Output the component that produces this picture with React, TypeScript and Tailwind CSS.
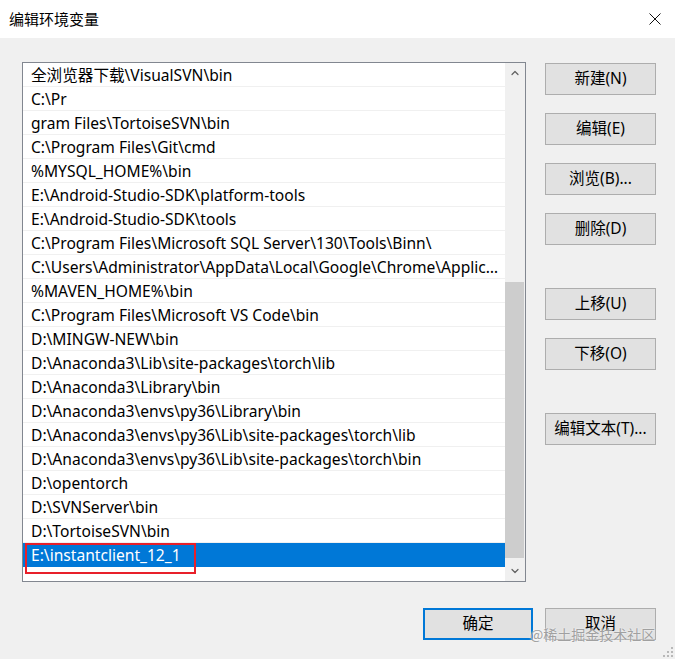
import { ChevronUp, ChevronDown } from 'lucide-react'

const paths = [
    '全浏览器下载\\VisualSVN\\bin',
    'C:\\Pr',
    'gram Files\\TortoiseSVN\\bin',
    'C:\\Program Files\\Git\\cmd',
    '%MYSQL_HOME%\\bin',
    'E:\\Android-Studio-SDK\\platform-tools',
    'E:\\Android-Studio-SDK\\tools',
    'C:\\Program Files\\Microsoft SQL Server\\130\\Tools\\Binn\\',
    'C:\\Users\\Administrator\\AppData\\Local\\Google\\Chrome\\Application',
    '%MAVEN_HOME%\\bin',
    'C:\\Program Files\\Microsoft VS Code\\bin',
    'D:\\MINGW-NEW\\bin',
    'D:\\Anaconda3\\Lib\\site-packages\\torch\\lib',
    'D:\\Anaconda3\\Library\\bin',
    'D:\\Anaconda3\\envs\\py36\\Library\\bin',
    'D:\\Anaconda3\\envs\\py36\\Lib\\site-packages\\torch\\lib',
    'D:\\Anaconda3\\envs\\py36\\Lib\\site-packages\\torch\\bin',
    'D:\\opentorch',
    'D:\\SVNServer\\bin',
    'D:\\TortoiseSVN\\bin',
    'E:\\instantclient_12_1',
]

const selected = paths.length - 1

const WinButton = ({ label, className = '' }: { label: string; className?: string }) => (
    <button className={`w-[111px] h-[32px] bg-[#e1e1e1] border border-[#adadad] text-[15.5px] text-black flex items-center justify-center ${className}`}>
        {label}
    </button>
)

const App = () => {
    return (
        <div className="relative w-[675px] h-[659px] bg-[#f0f0f0] overflow-hidden text-black" style={{ fontFamily: '"Noto Sans", "Noto Sans CJK SC", sans-serif' }}>
            {/* title bar */}
            <div className="h-[38px] bg-white flex items-center justify-between pl-[9px] pr-[14px]">
                <span className="text-[15px]">编辑环境变量</span>
                <svg className="w-[12px] h-[12px]" viewBox="0 0 12 12" fill="none">
                    <path d="M0.5 0.5 11.5 11.5M11.5 0.5 0.5 11.5" stroke="#111" strokeWidth="1" />
                </svg>
            </div>

            <div className="flex pt-[24px] pl-[22px]">
                {/* path list */}
                <div className="w-[504px] h-[520px] border border-[#828790] bg-white flex">
                    <div className="flex-1 flex flex-col min-w-0">
                        {paths.map((p, i) => (
                            <div
                                key={i}
                                className={`h-[24px] shrink-0 border-b pl-[8px] pr-[2px] text-[15.6px] leading-[25px] whitespace-nowrap overflow-hidden text-ellipsis ${i === selected ? 'bg-[#0078d7] text-white border-[#0078d7]' : 'border-[#f0f0f0]'}`}
                            >
                                {p}
                            </div>
                        ))}
                    </div>
                    {/* scrollbar */}
                    <div className="w-[20px] bg-[#f0f0f0] flex flex-col">
                        <div className="h-[19px] flex items-center justify-center text-[#606060]">
                            <ChevronUp size={12} strokeWidth={2.4} />
                        </div>
                        <div className="flex-1 flex flex-col justify-end pb-[2px] pr-[1px]">
                            <div className="h-[276px] bg-[#cdcdcd]" />
                        </div>
                        <div className="h-[21px] flex items-center justify-center text-[#606060]">
                            <ChevronDown size={12} strokeWidth={2.4} />
                        </div>
                    </div>
                </div>

                {/* action buttons */}
                <div className="flex flex-col pl-[19px] pt-[1px]">
                    <WinButton label="新建(N)" />
                    <WinButton label="编辑(E)" className="mt-[18px]" />
                    <WinButton label="浏览(B)..." className="mt-[18px]" />
                    <WinButton label="删除(D)" className="mt-[18px]" />
                    <WinButton label="上移(U)" className="mt-[43px]" />
                    <WinButton label="下移(O)" className="mt-[18px]" />
                    <WinButton label="编辑文本(T)..." className="mt-[43px]" />
                </div>
            </div>

            {/* dialog buttons */}
            <div className="flex justify-end gap-[12px] pr-[19px] mt-[26px]">
                <button className="w-[110px] h-[32px] bg-[#e1e1e1] border-2 border-[#0078d7] text-[15.5px] flex items-center justify-center">确定</button>
                <WinButton label="取消" />
            </div>

            {/* annotation box */}
            <div className="absolute left-[25px] top-[543px] w-[171px] h-[31px] border-2 border-[#e8202a]" />

            {/* watermark */}
            <div
                className="absolute left-[530px] top-[624px] text-[14px] text-[#a0a0a0] whitespace-nowrap [text-shadow:0_0_2px_#ffffff]"
                style={{ fontFamily: '"Noto Sans CJK SC", sans-serif' }}
            >
                @稀土掘金技术社区
            </div>

            {/* resize grip */}
            <svg className="absolute right-[2px] bottom-[2px] w-[10px] h-[10px]" viewBox="0 0 10 10">
                <rect x="8" y="0" width="2" height="2" fill="#b8b8b8" />
                <rect x="4" y="4" width="2" height="2" fill="#b8b8b8" />
                <rect x="8" y="4" width="2" height="2" fill="#b8b8b8" />
                <rect x="0" y="8" width="2" height="2" fill="#b8b8b8" />
                <rect x="4" y="8" width="2" height="2" fill="#b8b8b8" />
                <rect x="8" y="8" width="2" height="2" fill="#b8b8b8" />
            </svg>
        </div>
    )
}

export default App
